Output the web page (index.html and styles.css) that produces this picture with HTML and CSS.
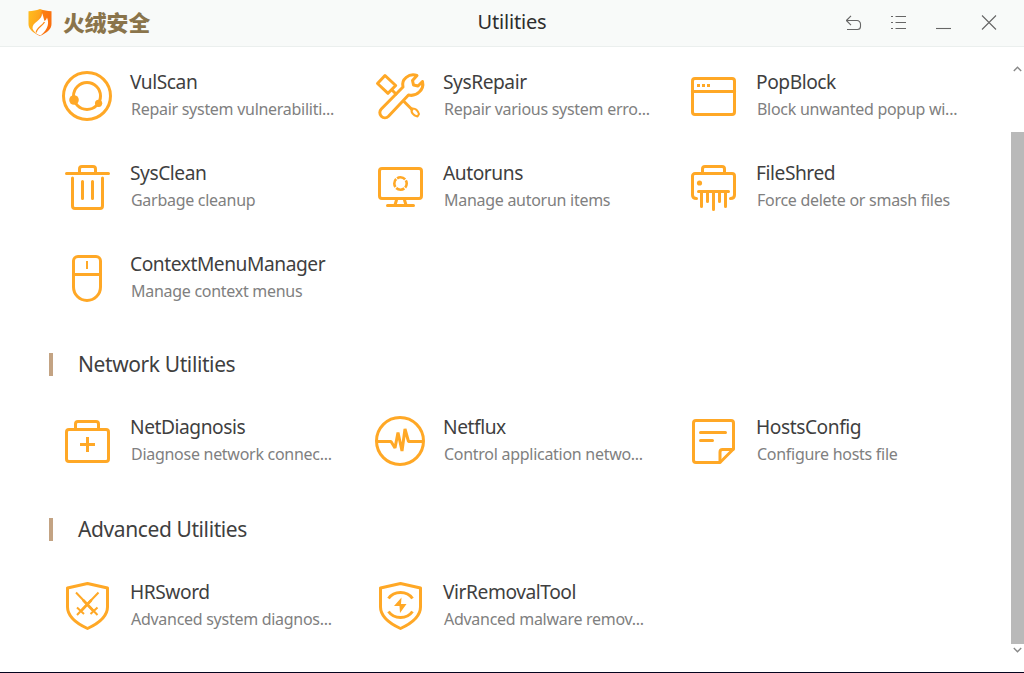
FILE: index.html
```
<!DOCTYPE html>
<html lang="en">
<head>
  <meta charset="UTF-8">
  <meta name="viewport" content="width=device-width, initial-scale=1.0">
  <title>Utilities</title>
  <link rel="stylesheet" href="styles.css">
</head>
<body>

  <header class="titlebar">
    <div class="brand">
      <svg class="brand-logo" width="24" height="27" viewBox="0 0 24 27">
        <defs>
          <linearGradient id="shield" x1="0" y1="0" x2="1" y2="0.3">
            <stop offset="0" stop-color="#ffbe1e" />
            <stop offset="0.5" stop-color="#fea51c" />
            <stop offset="0.6" stop-color="#fd7f12" />
            <stop offset="1" stop-color="#fa7010" />
          </linearGradient>
        </defs>
        <path fill="url(#shield)" d="M.5 2.3C5 2 8 1.400 12 0c4 1.400 7 2 11.500 2.300V15c0 5-4 8.500-11.500 12C4.500 23.500.5 20 .5 15z" />
        <path fill="#fff" d="M14 4C15.500 7 15.500 9.500 16.500 12c1.500-1 2-2 2.500-3.500 2 5 2 11-6.500 18C9 25.500 5.500 22.500 4.500 19.500 4 12.500 14.500 12 14 4z" />
        <path fill="none" stroke="#fd8a18" stroke-width="1.300" d="M8.300 23.500c0-4.500 5.700-6 8.200-10.500" />
      </svg>
      <span class="brand-name">火绒安全</span>
    </div>
    <h1>Utilities</h1>
    <div class="controls">
      <svg width="16" height="16" viewBox="0 0 16 16"><path d="M5 .8L.4 5.500 5 10.200M.5 5.500H11A3.500 3.500 0 0 1 14.500 9v2.500a3 3 0 0 1-3 3H1" /></svg>
      <svg width="16" height="16" viewBox="0 0 16 16"><path d="M0 1.500h2M4.500 1.500H15M0 7.500h2M4.500 7.500H15M0 13.500h2M4.500 13.500H15" /></svg>
      <svg width="16" height="16" viewBox="0 0 16 16"><path d="M0 13.500h15" /></svg>
      <svg width="16" height="16" viewBox="0 0 16 16"><path d="M1 .5l14 14M15 .5l-14 14" /></svg>
    </div>
  </header>

  <div class="window">
    <main>
      <div class="grid system">
        <div class="tool">
          <svg class="icon" viewBox="0 0 52 52">
            <circle cx="26" cy="26" r="23.500" />
            <circle cx="26" cy="26" r="13.500" />
            <circle class="solid" cx="13" cy="30" r="4.800" />
            <circle class="solid" cx="37.600" cy="33.300" r="3.600" />
          </svg>
          <div class="text"><h3>VulScan</h3><p>Repair system vulnerabiliti...</p></div>
        </div>
        <div class="tool">
          <svg class="icon" viewBox="0 0 52 52">
            <path d="M3.500 13.500L11 5.500 21.700 15.500 14 23.300zM18.500 20.500l3.500 3.500M30 31.500l8 8" />
            <path d="M43 5.500C35 3 27 9 29 17L7.300 39a4.900 4.900 0 0 0 7.200 7.200L34.500 25C42.500 27 50.500 19.500 48.500 11.500L44 16l-4.500-1-1-4.500z" />
            <path class="thin" d="M37.500 38.500c3-.5 6 1 7.500 5.500l-1.500 2.500c-4-1-6.500-4-6-8z" />
          </svg>
          <div class="text"><h3>SysRepair</h3><p>Repair various system erro...</p></div>
        </div>
        <div class="tool">
          <svg class="icon" viewBox="0 0 52 52">
            <rect x="5.500" y="8.500" width="42" height="36" rx="2.500" />
            <path d="M5.500 21.500h42" />
            <path class="flat" d="M10 15.500h3M15 15.500h3M20 15.500h3" />
          </svg>
          <div class="text"><h3>PopBlock</h3><p>Block unwanted popup wi...</p></div>
        </div>
        <div class="tool">
          <svg class="icon" viewBox="0 0 52 52">
            <path d="M5.500 12.500h42M18.500 12V8a2.500 2.500 0 0 1 2.500-2.500h11A2.500 2.500 0 0 1 34.500 8v4" />
            <path d="M11.500 17v28a2.500 2.500 0 0 0 2.500 2.500h25a2.500 2.500 0 0 0 2.500-2.500V17M21.500 20.500v17M31.500 20.500v17" />
          </svg>
          <div class="text"><h3>SysClean</h3><p>Garbage cleanup</p></div>
        </div>
        <div class="tool">
          <svg class="icon" viewBox="0 0 52 52">
            <rect x="5.500" y="7.500" width="42" height="30" rx="2.500" />
            <path d="M22.500 39l-1.500 5M30.500 39l1.500 5M13.500 44.500h26" />
            <circle class="ring" cx="26.500" cy="22.500" r="6.200" />
          </svg>
          <div class="text"><h3>Autoruns</h3><p>Manage autorun items</p></div>
        </div>
        <div class="tool">
          <svg class="icon" viewBox="0 0 52 52">
            <path d="M15.500 12V8A2.500 2.500 0 0 1 18 5.500h17A2.500 2.500 0 0 1 37.500 8v4" />
            <path d="M9.500 37.500C7 37.500 5.500 36.500 5.500 34V15A2.500 2.500 0 0 1 8 12.500h37a2.500 2.500 0 0 1 2.500 2.500v19c0 2.500-1.500 3.500-4 3.500" />
            <path d="M11.500 30.500h30M14.500 31v14.500M20.500 31v9.500M26.500 31v17.500M32.500 31v9.500M38.500 31v14.500" />
            <circle class="solid" cx="12.500" cy="22" r="2.600" />
          </svg>
          <div class="text"><h3>FileShred</h3><p>Force delete or smash files</p></div>
        </div>
        <div class="tool">
          <svg class="icon" viewBox="0 0 52 52">
            <path d="M12.500 9A4.500 4.500 0 0 1 17 4.500h18A4.500 4.500 0 0 1 39.500 9v26a13.500 13.500 0 0 1-27 0z" />
            <path d="M12.500 22.500h27" />
            <path class="mid" d="M26 9v8" />
          </svg>
          <div class="text"><h3>ContextMenuManager</h3><p>Manage context menus</p></div>
        </div>
      </div>

      <h2>Network Utilities</h2>
      <div class="grid network">
        <div class="tool">
          <svg class="icon" viewBox="0 0 52 52">
            <rect x="5.500" y="14.500" width="42" height="32" rx="2.500" />
            <path d="M14.500 14V9A2.500 2.500 0 0 1 17 6.500h18A2.500 2.500 0 0 1 37.500 9v5" />
            <path class="flat" d="M19 29.500h15M26.500 22v15" />
          </svg>
          <div class="text"><h3>NetDiagnosis</h3><p>Diagnose network connec...</p></div>
        </div>
        <div class="tool">
          <svg class="icon" viewBox="0 0 52 52">
            <circle cx="26" cy="26" r="23.500" />
            <path class="pulse" d="M3 26.500h14l4 6.500 3-15.500 4 18.500 3-22 3.500 12.500H49" />
          </svg>
          <div class="text"><h3>Netflux</h3><p>Control application netwo...</p></div>
        </div>
        <div class="tool">
          <svg class="icon" viewBox="0 0 52 52">
            <path d="M33 47.500H9A2.500 2.500 0 0 1 6.500 45V8A2.500 2.500 0 0 1 9 5.500h35A2.500 2.500 0 0 1 46.500 8v26z" />
            <path d="M33 47V37a2.500 2.500 0 0 1 2.500-2.500H46M13.500 17.500h25M13.500 25.500h12" />
          </svg>
          <div class="text"><h3>HostsConfig</h3><p>Configure hosts file</p></div>
        </div>
      </div>

      <h2>Advanced Utilities</h2>
      <div class="grid advanced">
        <div class="tool">
          <svg class="icon" viewBox="0 0 52 52">
            <path d="M26.500 3.500L46.500 8v19c0 9-7 15.500-20 21.500C13.500 42.500 6.500 36 6.500 27V8z" />
            <path class="mid" d="M15 12.500L36.500 35M37.500 12.500L16 35M29.500 34l7-6.500M23 34l-7-6.500" />
            <path d="M22.500 20.500l9.500 10M30 20.500l-9.500 10" class="blade" />
          </svg>
          <div class="text"><h3>HRSword</h3><p>Advanced system diagnos...</p></div>
        </div>
        <div class="tool">
          <svg class="icon" viewBox="0 0 52 52">
            <path d="M26.500 3.500L46.500 8v19c0 9-7 15.500-20 21.500C13.500 42.500 6.500 36 6.500 27V8z" />
            <path class="flat" d="M14.500 18.500c5.500-8 18.500-8 24 0M14.500 31.500c5.500 8 18.500 8 24 0" />
            <path class="solid" d="M27.500 17.500l-7.500 8.500h5.500l.5 7 6.500-9h-5.500z" />
          </svg>
          <div class="text"><h3>VirRemovalTool</h3><p>Advanced malware remov...</p></div>
        </div>
      </div>
    </main>

    <div class="scrollbar">
      <svg width="9" height="6" viewBox="0 0 9 6"><path d="M.8 5l3.700-3.700L8.200 5" /></svg>
      <div class="thumb"></div>
      <svg width="9" height="6" viewBox="0 0 9 6"><path d="M.8 1l3.700 3.700L8.200 1" /></svg>
    </div>
  </div>

</body>
</html>
```
FILE: styles.css
```
* {
  box-sizing: border-box;
  margin: 0;
  padding: 0;
}
body {
  display: flex;
  flex-direction: column;
  height: 673px;
  overflow: hidden;
  font-family: "Noto Sans", "Noto Sans CJK SC", sans-serif;
  color: #3f3f3f;
  background-color: #fff;
  border-bottom: 1px solid #04041f;
}
h1, h2, h3 {
  font-weight: 400;
}
.titlebar {
  display: grid;
  grid-template-columns: 1fr auto 1fr;
  height: 47px;
  background-color: #f8faf9;
  border-bottom: 1px solid #ebefee;
}
.brand {
  display: flex;
  gap: 11px;
  padding: 9px 0 0 28px;
}
.brand-name {
  font-family: "Noto Sans CJK SC", sans-serif;
  font-size: 21.8px;
  font-weight: 900;
  line-height: 25px;
  color: #8a744b;
}
.titlebar h1 {
  font-size: 20px;
  line-height: 43px;
  letter-spacing: -0.2px;
  color: #2d2d2d;
}
.controls {
  display: flex;
  justify-content: flex-end;
  gap: 29px;
  padding: 15px 27px 0 0;
}
.controls svg {
  fill: none;
  stroke: #666;
  stroke-width: 1.1;
}
.window {
  display: flex;
  flex: 1;
}
main {
  flex: 1;
  padding: 23px 0 0 49px;
}
.grid {
  display: grid;
  grid-template-columns: repeat(3, 313px);
  row-gap: 39px;
  padding-left: 12px;
}
.system {
  margin-bottom: 49px;
}
.network {
  margin-bottom: 51px;
}
.tool {
  display: flex;
  gap: 17px;
  height: 52px;
  white-space: nowrap;
}
.icon {
  flex: none;
  width: 52px;
  height: 52px;
  fill: none;
  stroke: #ffa826;
  stroke-width: 3;
  stroke-linecap: round;
  stroke-linejoin: round;
}
.icon .solid {
  fill: #ffa826;
  stroke: none;
}
.icon .flat {
  stroke-linecap: butt;
}
.icon .thin {
  stroke-width: 2;
}
.icon .mid {
  stroke-width: 2;
  stroke-linecap: butt;
}
.icon .blade {
  stroke-width: 2.6;
}
.icon .ring {
  stroke-width: 2.6;
  stroke-linecap: butt;
  stroke-dasharray: 8.64 1.1;
  stroke-dashoffset: 4.3;
}
.icon .pulse {
  stroke-linecap: butt;
  stroke-linejoin: miter;
  stroke-miterlimit: 1;
}
.tool h3 {
  font-size: 19.2px;
  line-height: 24px;
  letter-spacing: -0.45px;
}
.tool p {
  margin-top: 2px;
  padding-left: 1px;
  font-size: 16px;
  line-height: 27px;
  letter-spacing: -0.28px;
  color: #808080;
}
h2 {
  height: 23px;
  margin-bottom: 39px;
  padding-left: 25px;
  border-left: 4px solid #c3a383;
  font-size: 21px;
  line-height: 23px;
  letter-spacing: -0.4px;
}
.scrollbar {
  display: flex;
  flex-direction: column;
  align-items: center;
  width: 13px;
  padding-top: 19px;
}
.scrollbar svg {
  fill: none;
  stroke: #888;
  stroke-width: 1.4;
}
.thumb {
  width: 13px;
  height: 512px;
  margin: 60px 0 3px;
  background-color: #b9b9b9;
}
```
